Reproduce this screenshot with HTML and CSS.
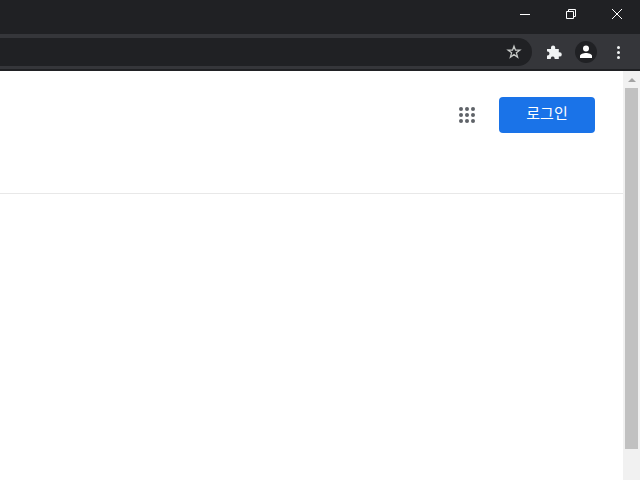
FILE: index.html
```html
<!DOCTYPE html>
<html lang="ko">
<head>
    <meta charset="UTF-8">
    <title>로그인</title>
    <link rel="stylesheet" href="styles.css">
</head>
<body>
    <!-- Title bar -->
    <div class="titlebar">
        <div class="win-btn">
            <svg width="10" height="10" viewBox="0 0 10 10"><path d="M0 5.5H10" stroke="#fff" fill="none"/></svg>
        </div>
        <div class="win-btn">
            <svg width="10" height="10" viewBox="0 0 10 10"><path d="M0.5 2.5H7.5V9.5H0.5ZM2.5 2.5V0.5H9.5V7.5H7.5" stroke="#fff" fill="none"/></svg>
        </div>
        <div class="win-btn">
            <svg width="12" height="12" viewBox="0 0 12 12"><path d="M1 1L11 11M11 1L1 11" stroke="#fff" fill="none"/></svg>
        </div>
    </div>

    <!-- Toolbar -->
    <div class="toolbar">
        <div class="omnibox">
            <svg class="star" width="16" height="16" viewBox="0 0 16 16"><path d="M8 2.2L9.5 6.2H13.8L10.4 8.8L11.6 13.1L8 10.6L4.4 13.1L5.6 8.8L2.2 6.2H6.5Z" stroke="#c4c7c5" stroke-width="1.3" fill="none"/></svg>
        </div>
        <div class="tools">
            <svg class="puzzle" width="16" height="16" viewBox="0 0 16 16"><path d="M1 5H5V3.6A2.1 2.1 0 0 1 9.2 3.6V5H12.8V8.2H13.6A2.2 2.2 0 0 1 13.6 12.6H12.8V15H8.6V14A2 2 0 0 0 4.8 14V15H1V11.4H2A2.1 2.1 0 0 0 2 7.4H1Z" fill="#f1f3f4"/></svg>
            <div class="avatar">
                <svg width="14" height="14" viewBox="0 0 14 14"><circle cx="7" cy="3.6" r="3" fill="#fff"/><path d="M1 13V11C1 9 4.5 8 7 8C9.5 8 13 9 13 11V13Z" fill="#fff"/></svg>
            </div>
            <div class="dots"><span></span><span></span><span></span></div>
        </div>
    </div>

    <div class="viewport">
        <main class="page">
            <header class="page-head">
                <div class="apps">
                    <span></span><span></span><span></span>
                    <span></span><span></span><span></span>
                    <span></span><span></span><span></span>
                </div>
                <a class="login" href="#"><span class="login-text">로그인</span></a>
            </header>
        </main>

        <!-- Scrollbar -->
        <div class="scrollbar">
            <div class="arrow"><i></i></div>
            <div class="thumb"></div>
        </div>
    </div>
</body>
</html>
```

FILE: styles.css
```css
body {
    margin: 0;
    width: 640px;
    height: 480px;
    overflow: hidden;
    display: flex;
    flex-direction: column;
    background: #fff;
    font-family: "Noto Sans CJK KR", "Noto Sans", sans-serif;
}

/* Title bar */
.titlebar {
    height: 34px;
    background: #202124;
    display: flex;
    justify-content: flex-end;
}

.win-btn {
    width: 46px;
    height: 28px;
    display: flex;
    align-items: center;
    justify-content: center;
}

/* Toolbar */
.toolbar {
    height: 35px;
    background: #35363a;
    border-bottom: 2px solid #202124;
    display: flex;
    align-items: flex-start;
}

.omnibox {
    width: 532px;
    height: 28px;
    margin-top: 4px;
    background: #202124;
    border-radius: 0 14px 14px 0;
    display: flex;
    align-items: center;
    justify-content: flex-end;
    padding-right: 10px;
    box-sizing: border-box;
}

.tools {
    flex: 1;
    display: flex;
    align-items: center;
    height: 36px;
    padding-left: 14px;
}

.avatar {
    width: 22px;
    height: 22px;
    margin-left: 13px;
    border-radius: 50%;
    background: #202124;
    display: flex;
    align-items: center;
    justify-content: center;
}

.dots {
    margin-left: 20px;
    display: flex;
    flex-direction: column;
    gap: 2px;
}

.dots span {
    width: 3px;
    height: 3px;
    border-radius: 50%;
    background: #f1f3f4;
}

/* Page */
.viewport {
    flex: 1;
    display: flex;
    min-height: 0;
}

.page {
    flex: 1;
}

.page-head {
    height: 96px;
    border-bottom: 1px solid #e8e8e8;
    display: flex;
    align-items: flex-start;
    justify-content: flex-end;
    padding-top: 26px;
    padding-right: 28px;
}

.apps {
    display: grid;
    grid-template-columns: repeat(3, 4px);
    gap: 2px;
    margin-top: 10px;
    margin-right: 24px;
}

.apps span {
    width: 4px;
    height: 4px;
    border-radius: 50%;
    background: #5f6368;
}

.login {
    width: 96px;
    height: 36px;
    background: #1a73e8;
    border-radius: 4px;
    color: #fff;
    font-size: 15px;
    line-height: 32px;
    text-align: center;
    text-decoration: none;
}

/* Scrollbar */
.scrollbar {
    width: 17px;
    background: #f1f1f1;
    display: flex;
    flex-direction: column;
    align-items: center;
}

.arrow {
    height: 17px;
    display: flex;
    align-items: center;
    justify-content: center;
}

.arrow i {
    border: 4px solid transparent;
    border-top: 0;
    border-bottom: 4px solid #a3a3a3;
}

.thumb {
    width: 13px;
    height: 361px;
    background: #c1c1c1;
}
```
